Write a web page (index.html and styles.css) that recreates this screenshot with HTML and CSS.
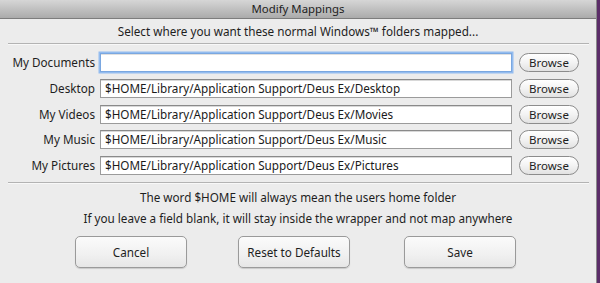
FILE: index.html
```html
<!DOCTYPE html>
<html>
<head>
<meta charset="utf-8">
<link rel="stylesheet" href="styles.css">
</head>
<body>
<div class="window">
  <div class="titlebar">Modify Mappings</div>
  <div class="subtitle">Select where you want these normal Windows™ folders mapped...</div>
  <div class="sep"></div>
  <div class="rows">
    <label class="lbl">My Documents</label>
    <div class="field focus"></div>
    <button class="browse">Browse</button>

    <label class="lbl">Desktop</label>
    <div class="field">$HOME/Library/Application Support/Deus Ex/Desktop</div>
    <button class="browse">Browse</button>

    <label class="lbl">My Videos</label>
    <div class="field">$HOME/Library/Application Support/Deus Ex/Movies</div>
    <button class="browse">Browse</button>

    <label class="lbl">My Music</label>
    <div class="field">$HOME/Library/Application Support/Deus Ex/Music</div>
    <button class="browse">Browse</button>

    <label class="lbl">My Pictures</label>
    <div class="field">$HOME/Library/Application Support/Deus Ex/Pictures</div>
    <button class="browse">Browse</button>
  </div>
  <div class="sep sep2"></div>
  <div class="notes">
    <div>The word $HOME will always mean the users home folder</div>
    <div>If you leave a field blank, it will stay inside the wrapper and not map anywhere</div>
  </div>
  <div class="actions">
    <button class="btn">Cancel</button>
    <button class="btn">Reset to Defaults</button>
    <button class="btn btn-save">Save</button>
  </div>
</div>
</body>
</html>
```

FILE: styles.css
```css
html, body {
  margin: 0;
  padding: 0;
}
body {
  width: 600px;
  height: 283px;
  background: #5b2d68;
  font-family: "Noto Sans", "DejaVu Sans", sans-serif;
  font-size: 11.7px;
  color: #1e1e1e;
  overflow: hidden;
}
.window {
  width: 596px;
  height: 283px;
  background: #ececec;
  border-right: 1px solid #8a8a8a;
  display: flex;
  flex-direction: column;
}
.titlebar {
  height: 18px;
  line-height: 18px;
  text-align: center;
  background: linear-gradient(#d6d6d6, #ababab);
  border-bottom: 1px solid #7d7d7d;
  color: #222;
  font-size: 11.4px;
}
.subtitle {
  height: 24px;
  line-height: 24px;
  text-align: center;
}
.sep {
  margin: 0 7px 0 8px;
  height: 1px;
  background: #b3b3b3;
  border-bottom: 1px solid #f8f8f8;
}
.rows {
  display: grid;
  grid-template-columns: 92px 412px 62px;
  column-gap: 5px;
  row-gap: 6.75px;
  padding: 8px 0 0 0;
  margin-left: 3px;
  align-items: center;
}
.lbl {
  text-align: right;
  line-height: 19px;
  padding-right: 0;
}
.field {
  height: 17px;
  line-height: 17px;
  background: #fff;
  border: 1px solid #9b9b9b;
  border-top-color: #8a8a8a;
  box-shadow: inset 0 1px 0 #d8d8d8;
  padding: 0 4px;
  white-space: nowrap;
  overflow: hidden;
  color: #1a1a1a;
}
.field.focus {
  border-color: #7aa7e0;
  box-shadow: 0 0 0 1.5px #93bcef, inset 0 1px 0 #e0e0e0;
}
.browse {
  height: 19px;
  margin-left: 2px;
  border: 1px solid #8c8c8c;
  border-radius: 10px;
  background: linear-gradient(#ffffff, #f3f3f3 50%, #e2e2e2);
  font-family: inherit;
  font-size: 11.5px;
  color: #1e1e1e;
  padding: 0;
  line-height: 17px;
}
.sep2 {
  margin-top: 7px;
}
.notes {
  text-align: center;
  line-height: 21px;
  padding-top: 3px;
}
.actions {
  display: flex;
  gap: 51px;
  margin-top: 7px;
  padding-left: 75px;
}
.btn {
  width: 112px;
  height: 32px;
  border: 1px solid #9a9a9a;
  border-radius: 5px;
  background: linear-gradient(#fbfbfb, #f0f0f0 60%, #e6e6e6);
  box-shadow: 0 1px 1px rgba(0,0,0,0.15);
  font-family: inherit;
  font-size: 11.7px;
  color: #1e1e1e;
  padding: 0;
}
.btn-save {
  margin-left: 3px;
}
```
